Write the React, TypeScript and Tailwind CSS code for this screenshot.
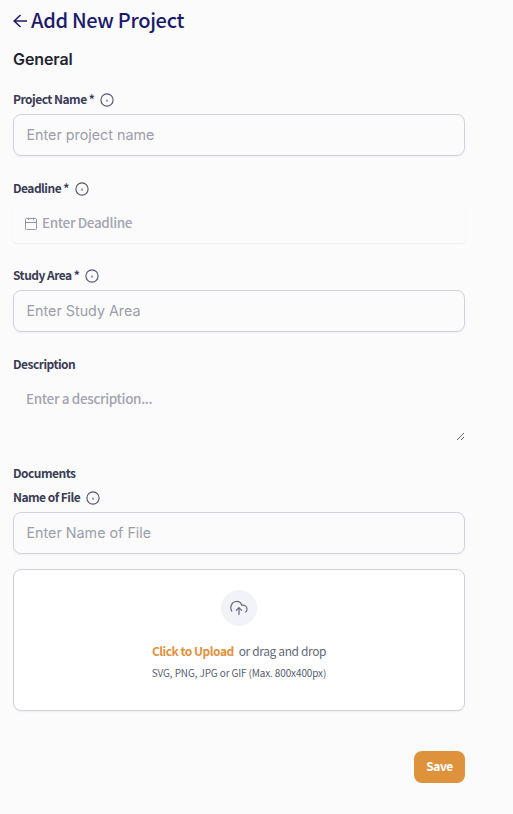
import React from "react";

const cjk = "font-['Noto_Sans_CJK_SC','Noto_Sans_CJK_JP',sans-serif]";

function InfoIcon() {
  return (
    <svg width="14" height="14" viewBox="0 0 14 14" fill="none" stroke="#55586b" className="relative top-px shrink-0">
      <circle cx="7" cy="7" r="6.1" strokeWidth="1.15" />
      <path d="M7 6.4v2.4" strokeWidth="1.1" />
    </svg>
  );
}

function Label({ text, info, className = "" }: { text: string; info?: boolean; className?: string }) {
  return (
    <div className={`flex h-5 items-center gap-[6px] text-[12px] font-bold tracking-[-0.52px] text-[#3a3c55] ${className}`}>
      <span className="whitespace-nowrap leading-5">{text}</span>
      {info && <InfoIcon />}
    </div>
  );
}

function Field({ placeholder, className = "" }: { placeholder: string; className?: string }) {
  return (
    <input
      placeholder={placeholder}
      className={`block h-[42px] w-full rounded-lg border border-[#d1d2dc] bg-transparent px-[12.5px] pb-[2px] font-['Inter',sans-serif] text-[14.3px] shadow-[0_1px_2px_rgba(0,0,0,0.05)] placeholder:text-[#9c9daa] placeholder:opacity-100 ${className}`}
    />
  );
}

export default function App() {
  return (
    <main className={`h-[814px] w-full bg-[#fbfbfb] pl-[13px] ${cjk}`}>
      <form className="flex w-[452px] flex-col">
        <h1 className="flex h-[41px] items-center gap-[3px] text-[20px] font-medium tracking-[-0.3px] text-[#1c1a6c]">
          <svg width="15" height="14" viewBox="0 0 15 14" fill="none" stroke="currentColor" strokeWidth="1.5">
            <path d="M7.5 1L1.2 7l6.3 6M1.2 7H14" />
          </svg>
          <span className="whitespace-nowrap pb-[2px]">Add New Project</span>
        </h1>
        <h2 className="mt-[6px] h-6 font-['Inter',sans-serif] text-[16px] font-semibold leading-6 tracking-[-0.1px] text-[#1f2433]">General</h2>
        <Label text="Project Name *" info className="mt-[18px]" />
        <Field placeholder="Enter project name" className="mt-[5px]" />
        <Label text="Deadline *" info className="mt-[22px]" />
        <div className="mt-[6px] flex h-[39px] items-center gap-[5px] rounded-sm pb-px pl-3 text-[13.5px] font-medium tracking-[-0.35px] text-[#a3a4b0] shadow-[0_1px_2px_rgba(0,0,0,0.06)]">
          <svg width="12" height="14" viewBox="0 0 12 14" fill="none" stroke="#9698a5" className="relative top-px">
            <rect x=".5" y="1.5" width="11" height="11" rx="1" />
            <path d="M.5 5.5h11M3.5.5v2.5M8.5.5v2.5" />
          </svg>
          <span className="pb-[2px]">Enter Deadline</span>
        </div>
        <Label text="Study Area *" info className="mt-[22px]" />
        <Field placeholder="Enter Study Area" className="mt-[5px]" />
        <Label text="Description" className="mt-[22px]" />
        <textarea
          placeholder="Enter a description..."
          className="mt-[5px] block h-[62px] w-full resize-y bg-transparent px-[13px] pt-[9px] text-[13.5px] font-medium leading-5 tracking-[-0.35px] placeholder:text-[#a3a4b0] placeholder:opacity-100"
        />
        <Label text="Documents" className="mt-[22px]" />
        <Label text="Name of File" info className="mt-[4px]" />
        <Field placeholder="Enter Name of File" className="mt-[5px]" />
        <div className="mt-[15px] flex h-[142px] flex-col items-center rounded-lg border border-[#d1d2dc] bg-white pt-[20px] shadow-[0_1px_2px_rgba(0,0,0,0.05)]">
          <div className="flex size-9 items-center justify-center rounded-full bg-[#f2f3f8]">
            <svg width="18" height="16" viewBox="0 0 18 16" fill="none" stroke="#686b7d" strokeWidth="1.2" strokeLinecap="round">
              <path d="M1.8 11.2C-.4 7.6 1.2 2.2 5.8 1.5c3-.4 5 1.2 6 3.7 3.2-.4 5.4 1.5 5.2 4.3-.1 1.2-.7 2-1.4 2.5M9 14.5V8M6.4 10.3L9 7.7l2.6 2.6" />
            </svg>
          </div>
          <p className="mt-[15px] flex h-5 items-center gap-[5px] whitespace-nowrap text-[12px] text-[#64677a]">
            <span className="font-bold tracking-[-0.5px] text-[#df923c]">Click to Upload</span>
            <span className="tracking-[-0.38px]">or drag and drop</span>
          </p>
          <p className="mt-[3px] h-[18px] whitespace-nowrap text-[10px] leading-[18px] tracking-[-0.13px] text-[#595c70]">SVG, PNG, JPG or GIF (Max. 800x400px)</p>
        </div>
        <button type="button" className="mt-[40px] h-8 w-[51px] self-end rounded-lg bg-[#df923c] pb-[2px] text-[12px] font-bold tracking-[-0.45px] text-white">
          Save
        </button>
      </form>
    </main>
  );
}
